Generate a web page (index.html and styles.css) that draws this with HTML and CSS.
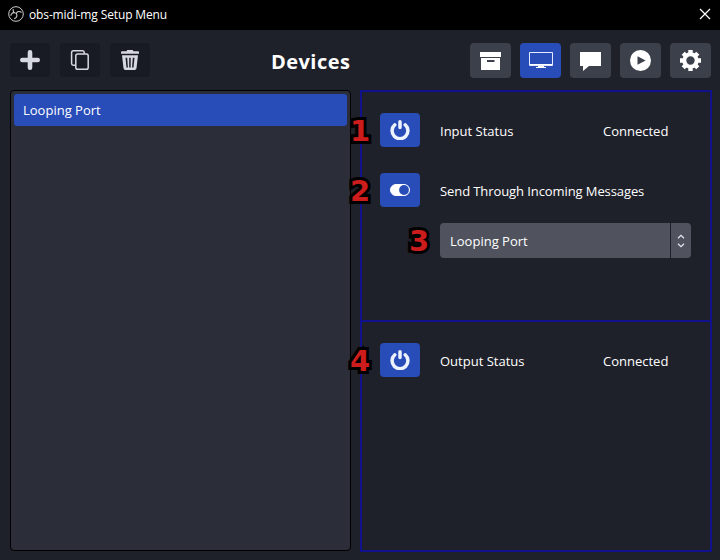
FILE: index.html
```html
<!DOCTYPE html>
<html lang="en">
<head>
<meta charset="utf-8">
<title>obs-midi-mg Setup Menu</title>
<link rel="stylesheet" href="styles.css">
</head>
<body>
<header class="titlebar">
  <svg class="logo" width="16" height="16" viewBox="0 0 16 16" fill="none" stroke="#ccc"><circle cx="8" cy="8" r="7.300"/><path d="M5.200 3C4.700 5.500 6 7.100 8.300 7.200C9.500 5.200 11.600 4.800 13.500 6.500M8.300 7.200C9.600 9.500 8.800 11.800 6.200 12.800M6.600 6.700C4.500 6.300 2.900 7.700 2.900 9.800" stroke-width="1.100"/></svg>
  <span class="caption">obs-midi-mg Setup Menu</span>
  <svg class="close" width="12" height="12" viewBox="0 0 12 12" stroke="#fff" stroke-width="1.200"><path d="M1 1l10 10M11 1L1 11"/></svg>
</header>
<nav class="toolbar">
  <div class="group edit">
    <button class="tool" aria-label="Add"><svg width="20" height="20" viewBox="0 0 20 20" stroke="#d6d8e2" stroke-width="4.600" stroke-linecap="round"><path d="M10 2.300v15.400M2.300 10h15.400"/></svg></button>
    <button class="tool" aria-label="Copy"><svg width="20" height="20" viewBox="0 0 20 20" fill="none" stroke="#d6d8e2" stroke-width="1.500"><rect x="5.800" y="4" width="12.400" height="15.200" rx="1.800"/><path d="M5.500 15.200H3.300a1.700 1.700 0 0 1-1.700-1.700V2.500A1.700 1.700 0 0 1 3.300.8h9.200a1.700 1.700 0 0 1 1.700 1.700v1.200"/></svg></button>
    <button class="tool" aria-label="Delete"><svg width="20" height="20" viewBox="0 0 20 20" fill="#d6d8e2"><path d="M1 2.200Q1 1.200 2 1.200H6.500L7.300 0h5.400l.8 1.200H18q1 0 1 1v1.600H1z"/><path fill-rule="evenodd" d="M2 5.300h16l-1.500 13q-.2 1.700-1.900 1.700H5.400q-1.700 0-1.900-1.700zM5.500 7.700l1 9.800h1.400l-.7-9.800zm3.700 0v9.800h1.500V7.700zm3.600 0l-.7 9.800h1.400l1-9.800z"/></svg></button>
  </div>
  <h1 class="heading">Devices</h1>
  <div class="group">
    <button class="tab" aria-label="Collections"><svg width="21" height="20" viewBox="0 0 21 20" fill="#fff"><path d="M0 1h21v5H0z"/><path fill-rule="evenodd" d="M1 7h19v12H1zM7 9v2h7.500V9z"/></svg></button>
    <button class="tab active" aria-label="Devices"><svg width="24" height="20" viewBox="0 0 24 20" fill="#fff"><path fill="none" stroke="#e4eaff" d="M.5 1.500h23v13H.5z"/><path d="M1 13h22v1H1zM9 15h6v1h2v1H7v-1h2z"/></svg></button>
    <button class="tab" aria-label="Messages"><svg width="21" height="20" viewBox="0 0 21 20" fill="#fff"><path d="M0 1h21v14H9l-6 5v-5H0z"/></svg></button>
    <button class="tab" aria-label="Actions"><svg width="21" height="21" viewBox="0 0 21 21"><circle cx="10.500" cy="10.500" r="10.500" fill="#fff"/><path d="M7.500 6.200v8.600l8.100-4.300z" fill="#3c404b"/></svg></button>
    <button class="tab" aria-label="Settings"><svg width="21" height="21" viewBox="-10.500 -10.500 21 21"><g fill="none" stroke="#fff"><circle r="6.200" stroke-width="4"/><path stroke-width="4.400" d="M0-10.500V-7M0 7v3.500M-10.500 0H-7M7 0h3.500M-7.300-7.300l2.300 2.300M5 5l2.300 2.300M-7.300 7.300L-5 5M5-5l2.300-2.300"/></g></svg></button>
  </div>
</nav>
<main class="content">
  <ul class="devices"><li class="device">Looping Port</li></ul>
  <div class="panels">
    <section class="panel input">
      <div class="row">
        <button class="toggle" aria-label="Input power"><svg width="20" height="20" viewBox="0 0 20 20" fill="none" stroke="#edf2ff" stroke-width="3.500" stroke-linecap="round"><path d="M10 1.800v5.600M4.800 4.800a7.900 7.900 0 1 0 10.400 0"/></svg></button>
        <span class="label">Input Status</span><span class="status">Connected</span><b class="mark">1</b>
      </div>
      <div class="row">
        <button class="toggle" aria-label="Send through"><svg width="20" height="12" viewBox="0 0 20 12"><rect x=".5" y=".5" width="19" height="11" rx="5.500" fill="#fff" stroke="#fff"/><circle cx="14" cy="6" r="4.900" fill="#284cb8"/></svg></button>
        <span class="label through">Send Through Incoming Messages</span><b class="mark">2</b>
      </div>
      <div class="select"><span class="value">Looping Port</span><span class="arrows"><svg width="8" height="14" viewBox="0 0 8 14" fill="none" stroke="#e8e9ee" stroke-width="1.200"><path d="M1 4.200l3-2.800 3 2.800M1 9.800l3 2.800 3-2.800"/></svg></span><b class="mark">3</b></div>
    </section>
    <section class="panel output">
      <div class="row">
        <button class="toggle" aria-label="Output power"><svg width="20" height="20" viewBox="0 0 20 20" fill="none" stroke="#edf2ff" stroke-width="3.500" stroke-linecap="round"><path d="M10 1.800v5.600M4.800 4.800a7.900 7.900 0 1 0 10.400 0"/></svg></button>
        <span class="label">Output Status</span><span class="status">Connected</span><b class="mark">4</b>
      </div>
    </section>
  </div>
</main>
</body>
</html>
```
FILE: styles.css
```css
* { box-sizing: border-box; }
body {
  margin: 0;
  width: 720px;
  height: 560px;
  overflow: hidden;
  background: #1f212a;
  color: #fff;
  font: 13px/20px "Open Sans", sans-serif;
}
svg { display: block; flex: none; }
button {
  display: flex;
  align-items: center;
  justify-content: center;
  border: 0;
  padding: 0;
  border-radius: 4px;
}
.titlebar {
  display: flex;
  align-items: center;
  height: 30px;
  padding: 0 9px 2px 8px;
  background: #000;
}
.caption {
  margin-left: 5px;
  padding-top: 1px;
  font: 12px/18px "Open Sans", sans-serif;
  letter-spacing: -0.13px;
}
.close { margin-left: auto; }
.toolbar {
  display: flex;
  height: 60px;
  padding: 13px 9px 0 10px;
}
.group { display: flex; flex: none; gap: 9px; }
.edit { gap: 10px; width: 261px; }
.tool { width: 40px; height: 34px; background: #181a24; }
.tab { width: 41px; height: 35px; background: #3c404b; }
.tab.active, .toggle { background: #284cb8; }
.heading {
  margin: 0 auto 0 0;
  font-size: 20px;
  line-height: 37px;
  font-weight: 700;
  letter-spacing: 0.45px;
}
.content { display: flex; gap: 9px; padding-left: 10px; }
.devices {
  width: 341px;
  height: 461px;
  margin: 0;
  padding: 3px;
  list-style: none;
  background: #2b2e38;
  border: 1px solid #000;
  border-radius: 4px;
}
.device {
  height: 32px;
  padding-left: 9px;
  line-height: 32px;
  background: #284cb8;
  border-radius: 3px;
}
.panels { width: 352px; height: 462px; border: 2px solid #11118e; }
.input { height: 230px; border-bottom: 2px solid #11118e; }
.panel { padding: 21px 0 0 18px; }
.row {
  position: relative;
  display: flex;
  align-items: center;
  height: 34px;
  margin-bottom: 26px;
}
.toggle { width: 40px; height: 34px; margin-right: 20px; }
.label { width: 163px; white-space: nowrap; line-height: 36px; padding-top: 2px; }
.through { letter-spacing: -0.09px; }
.status { line-height: 36px; padding-top: 2px; }
.select {
  position: relative;
  display: flex;
  width: 251px;
  height: 35px;
  margin: -10px 0 0 60px;
  background: #50535e;
  border-radius: 4px;
}
.value { width: 231px; padding-left: 10px; line-height: 36px; border-right: 1px solid #1f212a; }
.arrows { display: flex; width: 20px; align-items: center; justify-content: center; }
.mark {
  position: absolute;
  left: -30px;
  top: 3px;
  font: 700 29px/30px "DejaVu Sans", sans-serif;
  color: #cc1c1c;
  -webkit-text-stroke: 6px #000;
  paint-order: stroke fill;
}
.select .mark { left: -31px; }
```
